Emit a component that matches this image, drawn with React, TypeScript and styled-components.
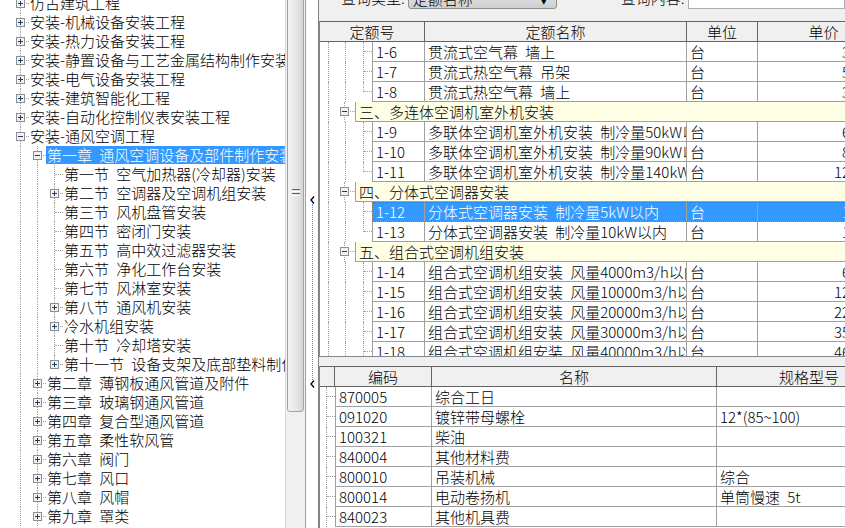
import React from "react";
import styled, { createGlobalStyle } from "styled-components";

const GlobalStyle = createGlobalStyle`
  html, body {
    margin: 0;
    padding: 0;
    background: #f0f0f0;
  }
  body {
    font-family: "Noto Sans CJK SC", "Liberation Sans", sans-serif;
    font-size: 15px;
    font-weight: 300;
    color: #000;
  }
`;

const LINE = "#a0a0a0";

type TreeNode = {
  level: number;
  kind: "plus" | "minus" | "leaf";
  text: string;
  last?: boolean;
  selected?: boolean;
};

const treeNodes: TreeNode[] = [
  { level: 0, kind: "plus", text: "仿古建筑工程" },
  { level: 0, kind: "plus", text: "安装-机械设备安装工程" },
  { level: 0, kind: "plus", text: "安装-热力设备安装工程" },
  { level: 0, kind: "plus", text: "安装-静置设备与工艺金属结构制作安装工程" },
  { level: 0, kind: "plus", text: "安装-电气设备安装工程" },
  { level: 0, kind: "plus", text: "安装-建筑智能化工程" },
  { level: 0, kind: "plus", text: "安装-自动化控制仪表安装工程" },
  { level: 0, kind: "minus", text: "安装-通风空调工程" },
  { level: 1, kind: "minus", text: "第一章 通风空调设备及部件制作安装", selected: true },
  { level: 2, kind: "leaf", text: "第一节 空气加热器(冷却器)安装" },
  { level: 2, kind: "plus", text: "第二节 空调器及空调机组安装" },
  { level: 2, kind: "leaf", text: "第三节 风机盘管安装" },
  { level: 2, kind: "leaf", text: "第四节 密闭门安装" },
  { level: 2, kind: "leaf", text: "第五节 高中效过滤器安装" },
  { level: 2, kind: "leaf", text: "第六节 净化工作台安装" },
  { level: 2, kind: "leaf", text: "第七节 风淋室安装" },
  { level: 2, kind: "plus", text: "第八节 通风机安装" },
  { level: 2, kind: "plus", text: "冷水机组安装" },
  { level: 2, kind: "leaf", text: "第十节 冷却塔安装" },
  { level: 2, kind: "plus", text: "第十一节 设备支架及底部垫料制作安装", last: true },
  { level: 1, kind: "plus", text: "第二章 薄钢板通风管道及附件" },
  { level: 1, kind: "plus", text: "第三章 玻璃钢通风管道" },
  { level: 1, kind: "plus", text: "第四章 复合型通风管道" },
  { level: 1, kind: "plus", text: "第五章 柔性软风管" },
  { level: 1, kind: "plus", text: "第六章 阀门" },
  { level: 1, kind: "plus", text: "第七章 风口" },
  { level: 1, kind: "plus", text: "第八章 风帽" },
  { level: 1, kind: "plus", text: "第九章 罩类" },
];

type QuotaRow =
  | { group: string }
  | { code: string; name: string; unit: string; price: string; last?: boolean; selected?: boolean };

const quotaRows: QuotaRow[] = [
  { code: "1-6", name: "贯流式空气幕 墙上", unit: "台", price: "365.48" },
  { code: "1-7", name: "贯流式热空气幕 吊架", unit: "台", price: "512.30" },
  { code: "1-8", name: "贯流式热空气幕 墙上", unit: "台", price: "367.12", last: true },
  { group: "三、多连体空调机室外机安装" },
  { code: "1-9", name: "多联体空调机室外机安装 制冷量50kW以内", unit: "台", price: "641.25" },
  { code: "1-10", name: "多联体空调机室外机安装 制冷量90kW以内", unit: "台", price: "856.20" },
  { code: "1-11", name: "多联体空调机室外机安装 制冷量140kW以内", unit: "台", price: "1244.86", last: true },
  { group: "四、分体式空调器安装" },
  { code: "1-12", name: "分体式空调器安装 制冷量5kW以内", unit: "台", price: "152.34", selected: true },
  { code: "1-13", name: "分体式空调器安装 制冷量10kW以内", unit: "台", price: "186.50", last: true },
  { group: "五、组合式空调机组安装" },
  { code: "1-14", name: "组合式空调机组安装 风量4000m3/h以内", unit: "台", price: "658.30" },
  { code: "1-15", name: "组合式空调机组安装 风量10000m3/h以内", unit: "台", price: "1215.42" },
  { code: "1-16", name: "组合式空调机组安装 风量20000m3/h以内", unit: "台", price: "2236.15" },
  { code: "1-17", name: "组合式空调机组安装 风量30000m3/h以内", unit: "台", price: "3548.60" },
  { code: "1-18", name: "组合式空调机组安装 风量40000m3/h以内", unit: "台", price: "4612.78" },
];

const materials = [
  { code: "870005", name: "综合工日", spec: "" },
  { code: "091020", name: "镀锌带母螺栓", spec: "12*(85~100)" },
  { code: "100321", name: "柴油", spec: "" },
  { code: "840004", name: "其他材料费", spec: "" },
  { code: "800010", name: "吊装机械", spec: "综合" },
  { code: "800014", name: "电动卷扬机", spec: "单筒慢速 5t" },
  { code: "840023", name: "其他机具费", spec: "" },
];

const Window = styled.div`
  display: flex;
  width: 845px;
  height: 528px;
  overflow: hidden;
  background: #f0f0f0;
`;

/* ---------- left tree ---------- */

const TreePane = styled.div`
  width: 285px;
  flex: none;
  background: #fff;
  overflow: hidden;
`;

const TreeList = styled.ul`
  list-style: none;
  margin: -6px 0 0;
  padding: 0 0 0 12px;
`;

const TreeRow = styled.li`
  display: flex;
  height: 19px;
  white-space: nowrap;
`;

const Guide = styled.span<{ $line: boolean }>`
  position: relative;
  width: 17px;
  flex: none;

  &::before {
    content: "";
    position: absolute;
    left: 8px;
    top: 0;
    bottom: 0;
    border-left: ${(p) => (p.$line ? `1px dotted ${LINE}` : "none")};
  }
`;

const Connector = styled.span<{ $last?: boolean; $w?: number; $x?: number }>`
  position: relative;
  width: ${(p) => p.$w ?? 17}px;
  flex: none;

  &::before {
    content: "";
    position: absolute;
    left: ${(p) => p.$x ?? 8}px;
    top: 0;
    height: ${(p) => (p.$last ? "10px" : "100%")};
    border-left: 1px dotted ${LINE};
  }

  &::after {
    content: "";
    position: absolute;
    left: ${(p) => (p.$x ?? 8) + 1}px;
    right: 0;
    top: 9px;
    border-top: 1px dotted ${LINE};
  }
`;

const BoxSlot = styled.span<{ $x?: number; $y?: number }>`
  position: absolute;
  z-index: 1;
  left: ${(p) => (p.$x ?? 8) - 4}px;
  top: ${(p) => p.$y ?? 5}px;
  width: 9px;
  height: 9px;
  display: flex;
`;

const TreeLabel = styled.span<{ $selected?: boolean }>`
  height: 18px;
  line-height: 18px;
  padding: 0 2px 0 1px;
  word-spacing: 4px;
  background: ${(p) => (p.$selected ? "#3399ff" : "transparent")};
  color: ${(p) => (p.$selected ? "#fff" : "#000")};
`;

const ExpandBox = ({ open }: { open: boolean }) => (
  <svg width="9" height="9" viewBox="0 0 9 9">
    <rect x="0.5" y="0.5" width="8" height="8" fill="#f2f2f2" stroke="#8f8f8f" />
    <path d="M2 4.5h5" stroke="#1e3d6e" />
    {!open && <path d="M4.5 2v5" stroke="#1e3d6e" />}
  </svg>
);

const TreeView = () => {
  const lastStack: boolean[] = [];
  return (
    <TreePane>
      <TreeList>
        {treeNodes.map((n, i) => {
          lastStack[n.level] = !!n.last;
          const guides = lastStack.slice(0, n.level);
          return (
            <TreeRow key={i}>
              {guides.map((last, k) => (
                <Guide key={k} $line={!last} />
              ))}
              <Connector $last={n.last}>
                {n.kind !== "leaf" && (
                  <BoxSlot>
                    <ExpandBox open={n.kind === "minus"} />
                  </BoxSlot>
                )}
              </Connector>
              <TreeLabel $selected={n.selected}>{n.text}</TreeLabel>
            </TreeRow>
          );
        })}
      </TreeList>
    </TreePane>
  );
};

/* ---------- scrollbar & splitter ---------- */

const VScroll = styled.div`
  width: 19px;
  flex: none;
  display: flex;
  flex-direction: column;
  background: #f0f0f0;
  border-left: 1px solid #d9d9d9;
`;

const Thumb = styled.div`
  height: 436px;
  margin: -26px 1px 0;
  flex: none;
  border: 1px solid #a2a2a2;
  border-radius: 3px;
  background: linear-gradient(to right, #f4f4f4, #e6e6e6 55%, #d6d6d6);
  display: flex;
  align-items: center;
  justify-content: center;
`;

const Grip = () => (
  <svg width="8" height="8" viewBox="0 0 8 8">
    {[0.5, 2.5, 4.5, 6.5].map((y, i) =>
      i % 2 === 0 ? (
        <path key={y} d={`M0 ${y}h8`} stroke="#5f5f5f" />
      ) : (
        <path key={y} d={`M0 ${y}h8`} stroke="#ffffff" />
      )
    )}
  </svg>
);

const Splitter = styled.div`
  width: 12px;
  flex: none;
  background: #fff;
  border-left: 1px solid #a0a0a0;
  border-right: 1px solid #808080;
  display: flex;
  flex-direction: column;
  align-items: center;
  padding-top: 196px;
`;

const SplitLine = styled.div`
  height: 176px;
  border-left: 1px dotted #3399ff;
`;

const Chevron = () => (
  <svg width="5" height="8" viewBox="0 0 5 8">
    <path d="M4 0.5L1 4L4 7.5" fill="none" stroke="#000" strokeWidth="1.3" />
  </svg>
);

/* ---------- right side ---------- */

const RightPane = styled.div`
  flex: 1;
  min-width: 0;
  display: flex;
  flex-direction: column;
  background: #f0f0f0;
  overflow: hidden;
`;

const QueryBar = styled.div`
  height: 21px;
  flex: none;
  display: flex;
  align-items: flex-end;
  padding-left: 22px;
  overflow: hidden;
`;

const QueryLabel = styled.span<{ $ml?: number }>`
  line-height: 22px;
  margin: 0 3px 12px ${(p) => p.$ml ?? 0}px;
  white-space: nowrap;
`;

const Select = styled.div`
  width: 149px;
  height: 22px;
  margin-bottom: 12px;
  box-sizing: border-box;
  border: 1px solid #8e8f8f;
  border-radius: 3px;
  background: linear-gradient(#f2f2f2, #ebebeb 50%, #dddddd 51%, #cfcfcf);
  display: flex;
  align-items: center;
  padding: 0 8px 0 4px;
  justify-content: space-between;
`;

const TextInput = styled.div`
  flex: 1;
  height: 22px;
  margin-bottom: 12px;
  box-sizing: border-box;
  border: 1px solid #abadb3;
  background: #fff;
`;

const Grid = styled.div<{ $h?: number }>`
  height: ${(p) => (p.$h ? `${p.$h}px` : "auto")};
  flex: ${(p) => (p.$h ? "none" : "1")};
  overflow: hidden;
  background: #fff;
  border-left: 1px solid #828790;
`;

const HeaderRow = styled.div`
  display: flex;
  border-top: 1px solid #646464;
  background: #f0f0f0;
`;

const HeaderCell = styled.div<{ $w: number }>`
  width: ${(p) => p.$w}px;
  flex: none;
  height: 20px;
  box-sizing: border-box;
  line-height: 19px;
  text-align: center;
  border-right: 1px solid #646464;
  border-bottom: 1px solid #646464;
  white-space: nowrap;
`;

const Row = styled.div`
  display: flex;
  height: 20px;
  white-space: nowrap;
`;

const Gutter = styled.div<{ $w: number }>`
  width: ${(p) => p.$w}px;
  flex: none;
  display: flex;
`;

const RowBody = styled.div<{ $selected?: boolean }>`
  display: flex;
  background: ${(p) => (p.$selected ? "#3399ff" : "#fff")};
  color: ${(p) => (p.$selected ? "#fff" : "#000")};
  outline: ${(p) => (p.$selected ? "1px dotted #a0682a" : "none")};
  outline-offset: -1px;
`;

const Cell = styled.div<{ $w: number; $align?: string; $first?: boolean }>`
  width: ${(p) => p.$w}px;
  flex: none;
  height: 20px;
  box-sizing: border-box;
  line-height: 19px;
  padding: 0 3px;
  overflow: hidden;
  text-overflow: clip;
  text-align: ${(p) => p.$align ?? "left"};
  border-right: 1px solid ${LINE};
  border-bottom: 1px solid ${LINE};
  border-left: ${(p) => (p.$first ? `1px solid ${LINE}` : "none")};
  word-spacing: 4px;
`;

const GroupBand = styled.div`
  flex: 1;
  height: 20px;
  box-sizing: border-box;
  background: #ffffe6;
  border-left: 1px solid ${LINE};
  border-bottom: 1px solid ${LINE};
  line-height: 19px;
  padding-left: 3px;
`;

const QuotaGrid = () => (
  <Grid $h={335}>
    <HeaderRow>
      <HeaderCell $w={105}>定额号</HeaderCell>
      <HeaderCell $w={262}>定额名称</HeaderCell>
      <HeaderCell $w={71}>单位</HeaderCell>
      <HeaderCell $w={132}>单价</HeaderCell>
    </HeaderRow>
    {quotaRows.map((r, i) =>
      "group" in r ? (
        <Row key={i}>
          <Gutter $w={35}>
            <Guide $line />
            <Connector $w={18} $x={7}>
              <BoxSlot $x={7} $y={5}>
                <ExpandBox open />
              </BoxSlot>
            </Connector>
          </Gutter>
          <GroupBand>{r.group}</GroupBand>
        </Row>
      ) : (
        <Row key={i}>
          <Gutter $w={52}>
            <Guide $line />
            <Guide $line />
            <Connector $w={18} $x={9} $last={r.last} />
          </Gutter>
          <RowBody $selected={r.selected}>
            <Cell $w={53} $first>
              {r.code}
            </Cell>
            <Cell $w={262}>{r.name}</Cell>
            <Cell $w={71}>{r.unit}</Cell>
            <Cell $w={132} $align="right">
              {r.price}
            </Cell>
          </RowBody>
        </Row>
      )
    )}
  </Grid>
);

const GridGap = styled.div`
  height: 10px;
  flex: none;
  border-top: 1px solid #828790;
  box-sizing: border-box;
`;

const MaterialGrid = () => (
  <Grid>
    <HeaderRow>
      <HeaderCell $w={15} />
      <HeaderCell $w={97}>编码</HeaderCell>
      <HeaderCell $w={285}>名称</HeaderCell>
      <HeaderCell $w={185}>规格型号</HeaderCell>
    </HeaderRow>
    {materials.map((m) => (
      <Row key={m.code}>
        <Gutter $w={15}>
          <Connector $w={15} $x={6} />
        </Gutter>
        <RowBody>
          <Cell $w={97} $first>
            {m.code}
          </Cell>
          <Cell $w={285}>{m.name}</Cell>
          <Cell $w={185}>{m.spec}</Cell>
        </RowBody>
      </Row>
    ))}
  </Grid>
);

export default function App() {
  return (
    <>
      <GlobalStyle />
      <Window>
        <TreeView />
        <VScroll>
          <Thumb>
            <Grip />
          </Thumb>
        </VScroll>
        <Splitter>
          <Chevron />
          <SplitLine />
          <Chevron />
        </Splitter>
        <RightPane>
          <QueryBar>
            <QueryLabel>查询类型:</QueryLabel>
            <Select>
              <span>定额名称</span>
              <span>▾</span>
            </Select>
            <QueryLabel $ml={64}>查询内容:</QueryLabel>
            <TextInput />
          </QueryBar>
          <QuotaGrid />
          <GridGap />
          <MaterialGrid />
        </RightPane>
      </Window>
    </>
  );
}
